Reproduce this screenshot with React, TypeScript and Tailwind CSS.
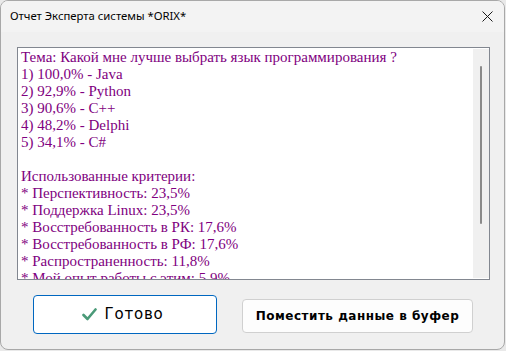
import React from 'react';

const results = [
  '1) 100,0% - Java',
  '2) 92,9% - Python',
  '3) 90,6% - C++',
  '4) 48,2% - Delphi',
  '5) 34,1% - C#',
];

const criteria = [
  '* Перспективность: 23,5%',
  '* Поддержка Linux: 23,5%',
  '* Восстребованность в РК: 17,6%',
  '* Восстребованность в РФ: 17,6%',
  '* Распространенность: 11,8%',
  '* Мой опыт работы с этим: 5,9%',
];

export default function App() {
  return (
    <div className="w-[506px] h-[351px] bg-[#e9e9e9]">
      <div className="w-[505px] h-[350px] rounded-lg border border-[#a8a8a8] bg-[#f0f0f0] flex flex-col overflow-hidden font-['Noto_Sans',sans-serif]">
        {/* Title bar */}
        <div className="h-[31px] shrink-0 bg-[#f3f3f3] flex items-center justify-between pl-[9px] pr-[10px]">
          <span className="text-[11.3px] text-black">Отчет Эксперта системы *ORIX*</span>
          <svg width="11" height="11" viewBox="0 0 11 11" className="mr-[1px]">
            <path d="M0.5 0.5 L10.5 10.5 M10.5 0.5 L0.5 10.5" stroke="#1a1a1a" strokeWidth="1" />
          </svg>
        </div>

        {/* Report box */}
        <div className="ml-[16px] mt-[15px] w-[473px] h-[233px] shrink-0 border border-[#828790] bg-white flex">
          <div className="flex-1 overflow-hidden pl-[3px] pt-[1px] font-['Liberation_Serif',serif] text-[15px] leading-[17px] text-[#800080]">
            <div>Тема: Какой мне лучше выбрать язык программирования ?</div>
            {results.map((r) => (
              <div key={r}>{r}</div>
            ))}
            <div className="h-[17px]" />
            <div>Использованные критерии:</div>
            {criteria.map((c) => (
              <div key={c} className="whitespace-nowrap">{c}</div>
            ))}
          </div>
          <div className="w-[16px] my-[1px] bg-[#f0f0f0] flex justify-center">
            <div className="w-[2px] mt-[17px] h-[158px] bg-[#8a8a8a] rounded-full" />
          </div>
        </div>

        {/* Buttons */}
        <div className="flex items-start mt-[15px] pl-[32px]">
          <button className="w-[184px] h-[39px] rounded-[4px] border border-[#0067c0] bg-white flex items-center justify-center gap-[7px] pr-[4px]">
            <svg width="15" height="13" viewBox="0 0 15 13">
              <path d="M1.5 7 L5.5 11 L13.5 1.5" fill="none" stroke="#4a9a78" strokeWidth="2.6" strokeLinecap="round" strokeLinejoin="round" />
            </svg>
            <span className="font-['DejaVu_Sans',sans-serif] text-[15px] tracking-[0.8px] text-black">Готово</span>
          </button>
          <button className="ml-[25px] mt-[4px] w-[231px] h-[34px] rounded-[4px] border border-[#d0d0d0] bg-[#fdfdfd] flex items-center justify-center">
            <span className="font-['DejaVu_Sans',sans-serif] text-[12px] font-bold tracking-[0.5px] text-black">Поместить данные в буфер</span>
          </button>
        </div>
      </div>
    </div>
  );
}
